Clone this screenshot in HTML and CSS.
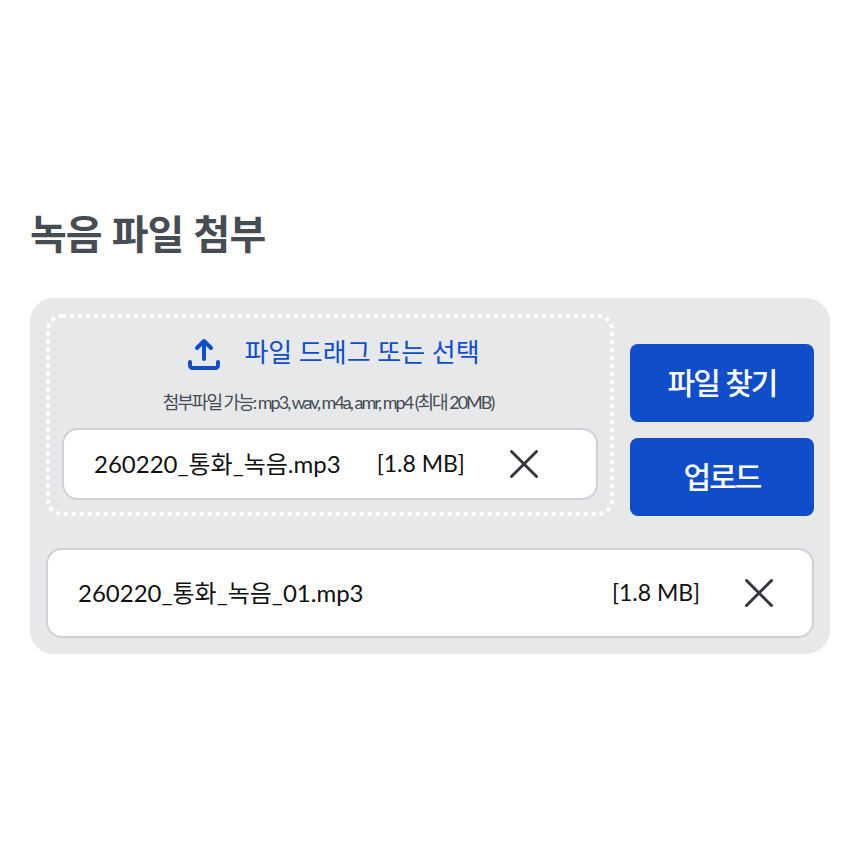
FILE: index.html
```html
<!DOCTYPE html>
<html lang="ko">
<head>
    <meta charset="UTF-8">
    <meta name="viewport" content="width=device-width, initial-scale=1.0">
    <title>녹음 파일 첨부</title>
    <link rel="stylesheet" href="styles.css">
</head>
<body>

    <main class="container">
        <h2>녹음 파일 첨부</h2>

        <section class="upload-box">
            <div class="upload-top">
                <div class="drop-zone">
                    <svg class="drop-border" aria-hidden="true"><rect x="2" y="2" rx="14"/></svg>
                    <a href="#" class="drop-title">
                        <svg class="upload-icon" viewBox="0 0 32 32" aria-hidden="true">
                            <path d="M16 21V3M9 10l7-7 7 7M2 24v3.500a2.500 2.500 0 0 0 2.500 2.500h23a2.500 2.500 0 0 0 2.500-2.500V24"/>
                        </svg>
                        <span>파일 드래그 또는 선택</span>
                    </a>
                    <p class="drop-hint">첨부파일 가능: mp3, wav, m4a, amr, mp4 (최대 20MB)</p>
                    <div class="file-item selected">
                        <span class="file-name">260220_통화_녹음.mp3</span>
                        <span class="file-size">[1.8 MB]</span>
                        <button type="button" class="remove" aria-label="삭제">
                            <svg viewBox="0 0 30 30" aria-hidden="true"><path d="M2.500 2.500l25 25M27.500 2.500l-25 25"/></svg>
                        </button>
                    </div>
                </div>
                <div class="buttons">
                    <button type="button" class="btn">파일 찾기</button>
                    <button type="button" class="btn">업로드</button>
                </div>
            </div>

            <div class="file-item uploaded">
                <span class="file-name">260220_통화_녹음_01.mp3</span>
                <span class="file-size">[1.8 MB]</span>
                <button type="button" class="remove" aria-label="삭제">
                    <svg viewBox="0 0 30 30" aria-hidden="true"><path d="M2.500 2.500l25 25M27.500 2.500l-25 25"/></svg>
                </button>
            </div>
        </section>
    </main>

</body>
</html>
```
FILE: styles.css
```css
* {
    box-sizing: border-box;
}
body {
    margin: 0;
    min-height: 100vh;
    display: flex;
    align-items: center;
    background: white;
    color: #111;
    font-family: Lato, "Noto Sans CJK KR", sans-serif;
}
.container {
    flex: 1;
    padding: 0 30px;
}
h2 {
    margin: 0 0 40px;
    font-family: "Noto Sans CJK KR", sans-serif;
    font-size: 40px;
    line-height: 52px;
    font-weight: 700;
    letter-spacing: -1px;
    color: #464c53;
}
.upload-box {
    padding: 16px;
    border-radius: 24px;
    background: #e6e8ea;
}
.upload-top {
    display: flex;
    align-items: flex-end;
    gap: 16px;
    margin-bottom: 32px;
}
.drop-zone {
    position: relative;
    flex: 1;
    padding: 16px;
}
/* square dots around the drop area */
.drop-border {
    position: absolute;
    top: 0;
    left: 0;
    width: 100%;
    height: 100%;
    pointer-events: none;
}
.drop-border rect {
    width: calc(100% - 4px);
    height: calc(100% - 4px);
    fill: none;
    stroke: white;
    stroke-width: 4;
    stroke-dasharray: 4 4;
}
.drop-title {
    display: flex;
    justify-content: center;
    gap: 24px;
    padding-left: 8px;
    color: #104dca;
    font-size: 26px;
    line-height: 44px;
    text-decoration: none;
}
.upload-icon {
    width: 32px;
    height: 32px;
    margin-top: 8px;
    fill: none;
    stroke: #104dca;
    stroke-width: 4;
    stroke-linecap: round;
    stroke-linejoin: round;
}
.drop-hint {
    margin: 14px 4px 12px 0;
    text-align: center;
    font-size: 18px;
    line-height: 28px;
    letter-spacing: -2px;
    color: #464c53;
}
.file-item {
    display: flex;
    align-items: center;
    padding: 0 30px;
    background: white;
    border: 2px solid #cdd1d5;
    border-radius: 16px;
    font-size: 24px;
}
.selected {
    height: 72px;
    gap: 36px;
}
.uploaded {
    height: 90px;
    gap: 36px;
}
.file-name {
    padding-bottom: 4px;
}
.file-size {
    padding-bottom: 2px;
    font-size: 23px;
}
.uploaded .file-name {
    flex: 1;
}
.remove {
    margin: 0 8px;
    padding: 0;
    border: none;
    background: none;
    cursor: pointer;
}
.remove svg {
    display: block;
    width: 30px;
    height: 30px;
    fill: none;
    stroke: #33363d;
    stroke-width: 3;
    stroke-linecap: round;
}
.buttons {
    display: flex;
    flex-direction: column;
    gap: 16px;
    width: 184px;
}
.btn {
    height: 78px;
    padding: 0 0 4px;
    border: none;
    border-radius: 8px;
    background: #104dca;
    color: white;
    font-family: "Noto Sans CJK KR", sans-serif;
    font-size: 30px;
    font-weight: 500;
    letter-spacing: -2px;
    cursor: pointer;
}
```
